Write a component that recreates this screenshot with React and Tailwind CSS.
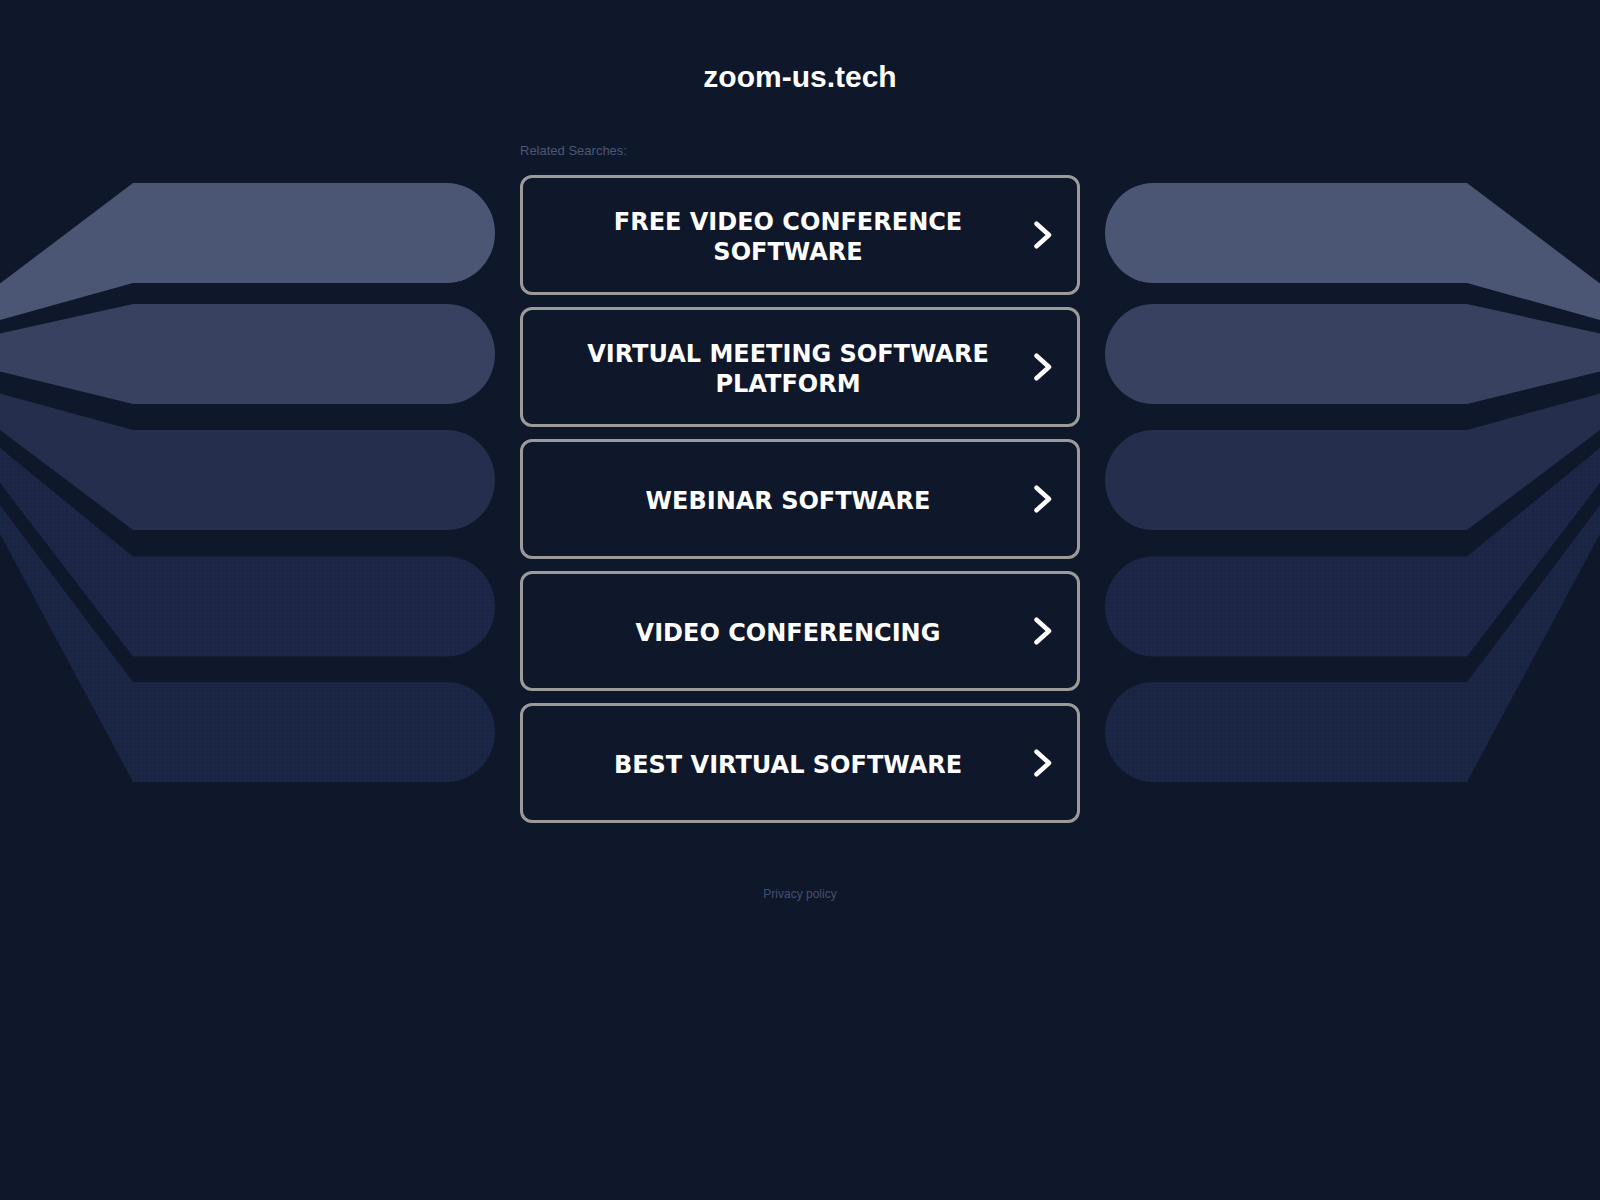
import React from "react";

const items = [
  "FREE VIDEO CONFERENCE SOFTWARE",
  "VIRTUAL MEETING SOFTWARE PLATFORM",
  "WEBINAR SOFTWARE",
  "VIDEO CONFERENCING",
  "BEST VIRTUAL SOFTWARE",
];

const shapes = [
  { t: 183, b: 283, l0: 283.5, l1: 320, c: "#4b5674" },
  { t: 304, b: 404, l0: 333.5, l1: 371.5, c: "#384160" },
  { t: 430, b: 530, l0: 393.5, l1: 430, c: "#252e4c" },
  { t: 556.5, b: 656.5, l0: 448, l1: 483, c: "#1c2545" },
  { t: 682, b: 782, l0: 505, l1: 534, c: "#1a2443" },
];

function Side() {
  return (
    <g>
      {shapes.map((s, i) => {
        const h = s.b - s.t;
        const d = `M0,${s.l0} L133,${s.t} L447,${s.t} A48,${h / 2} 0 0 1 447,${s.b} L133,${s.b} L0,${s.l1} Z`;
        return <path key={i} d={d} fill={s.c} />;
      })}
      {shapes.slice(3).map((s, i) => {
        const h = s.b - s.t;
        const d = `M0,${s.l0} L133,${s.t} L447,${s.t} A48,${h / 2} 0 0 1 447,${s.b} L133,${s.b} L0,${s.l1} Z`;
        return <path key={"p" + i} d={d} fill="url(#dots)" />;
      })}
    </g>
  );
}

function Chevron() {
  return (
    <svg width="20" height="28" viewBox="0 0 20 28" className="shrink-0">
      <polyline
        points="4.5,2.75 17,14 4.5,25.25"
        fill="none"
        stroke="#ffffff"
        strokeWidth="4.5"
        strokeLinecap="round"
        strokeLinejoin="round"
      />
    </svg>
  );
}

export default function App() {
  return (
    <div className="relative min-h-screen w-full overflow-hidden bg-[#0f172a]">
      <svg
        className="absolute top-0 left-1/2 -translate-x-1/2 pointer-events-none"
        width="1600"
        height="800"
        viewBox="0 0 1600 800"
      >
        <defs>
          <pattern id="dots" width="4" height="4" patternUnits="userSpaceOnUse">
            <circle cx="1" cy="1" r="0.6" fill="#3a4a78" opacity="0.35" />
          </pattern>
        </defs>
        <Side />
        <g transform="translate(1600,0) scale(-1,1)">
          <Side />
        </g>
      </svg>

      <div className="relative flex flex-col items-center">
        <h1 className="pt-[59px] text-[30px] leading-[36px] font-bold text-white font-['Liberation_Sans',Arial,sans-serif]">
          zoom-us.tech
        </h1>

        <div className="w-[560px] mt-[48px]">
          <div className="text-[13px] leading-[16px] text-[#4b5778] font-['Liberation_Sans',Arial,sans-serif]">
            Related Searches:
          </div>
          <div className="mt-[16px] flex flex-col gap-[12px]">
            {items.map((t) => (
              <a
                key={t}
                href="#"
                className="flex h-[120px] items-center rounded-[12px] border-[3px] border-[#9b9b9b] bg-[#0f172a] pl-[41px] pr-[25px]"
              >
                <span className="flex-1 mr-[20px] pt-[3px] text-center text-[24px] leading-[30px] font-bold text-white font-['DejaVu_Sans',Verdana,sans-serif]">
                  {t}
                </span>
                <Chevron />
              </a>
            ))}
          </div>
        </div>

        <div className="mt-[64px] text-[12px] leading-[14px] text-[#444f6f] font-['Liberation_Sans',Arial,sans-serif]">
          Privacy policy
        </div>
      </div>
    </div>
  );
}
